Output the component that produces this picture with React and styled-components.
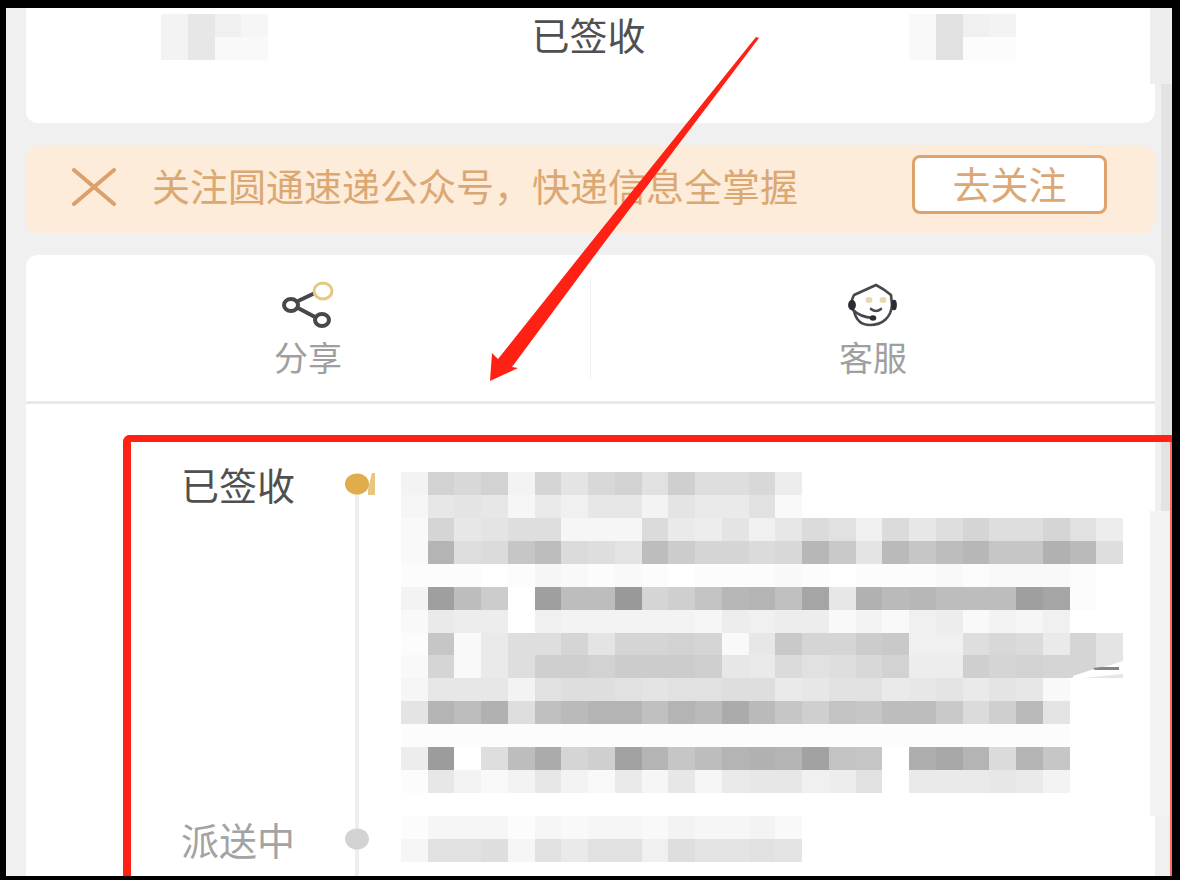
import React from "react";
import styled, { createGlobalStyle } from "styled-components";

const GlobalStyle = createGlobalStyle`
  * { box-sizing: border-box; }
  body {
    margin: 0;
    background: #000;
    font-family: "Noto Sans CJK SC", "Liberation Sans", sans-serif;
  }
  button { font-family: inherit; cursor: pointer; }
`;

const Frame = styled.div`
  min-height: 100vh;
  padding: 8px 8px 4px 6px;
  display: flex;
  background: #000;
`;

const Screen = styled.main`
  position: relative;
  flex: 1;
  min-width: 0;
  padding: 0 17px 0 20px;
  display: flex;
  flex-direction: column;
  background: #f0f0f0;
`;

const StatusCard = styled.header`
  padding: 6px 139px 63px 135px;
  display: flex;
  align-items: flex-start;
  justify-content: space-between;
  background: #fff;
  border-radius: 0 0 12px 12px;
`;

const StatusTitle = styled.h1`
  margin: 0;
  font-size: 38px;
  line-height: 40px;
  font-weight: 400;
  color: #505050;
`;

const Banner = styled.section`
  height: 87px;
  margin: 23px 0 22px;
  padding: 0 48px 6px 46px;
  display: flex;
  align-items: center;
  background: #fcecd9;
  border-radius: 12px;
`;

const CloseButton = styled.button`
  width: 44px;
  height: 38px;
  padding: 0;
  border: 0;
  background: none;
  svg { display: block; }
`;

const BannerText = styled.p`
  flex: 1;
  margin: 0 0 4px 36px;
  font-size: 38px;
  line-height: 46px;
  white-space: nowrap;
  color: #dba873;
`;

const FollowButton = styled.button`
  width: 195px;
  height: 59px;
  margin-bottom: 4px;
  padding: 0 0 4px;
  border: 3px solid #dfa26c;
  border-radius: 8px;
  background: #fff;
  font-size: 38px;
  line-height: 46px;
  color: #dba873;
`;

const Actions = styled.nav`
  display: flex;
  align-items: center;
  border-bottom: 3px solid #e8e8e8;
  border-radius: 12px 12px 0 0;
  background: #fff;
`;

const Divider = styled.span`
  width: 1px;
  height: 100px;
  background: #f1f1f1;
`;

const Action = styled.button`
  flex: 1;
  padding: 26px 0 23px;
  display: flex;
  flex-direction: column;
  align-items: center;
  gap: 5px;
  border: 0;
  background: none;
  font-size: 34px;
  line-height: 42px;
  color: #9f9f9f;
`;

const Timeline = styled.ol`
  flex: 1;
  margin: 0;
  padding: 68px 32px 0 155px;
  list-style: none;
  background: #fff;
`;

const Step = styled.li`
  min-height: ${(p) => (p.$last ? 49 : 355)}px;
  display: grid;
  grid-template-columns: 148px 56px 1fr;
`;

const StepLabel = styled.span`
  font-size: 38px;
  line-height: 24px;
  color: ${(p) => (p.$active ? "#505050" : "#a3a3a3")};
`;

const Rail = styled.span`
  position: relative;
  &::before {
    content: "";
    position: absolute;
    top: ${(p) => (p.$active ? 12 : 0)}px;
    bottom: 0;
    left: 26px;
    width: 4px;
    background: #eeeeee;
  }
  svg {
    position: absolute;
    top: 0;
    left: 16px;
  }
`;

const Detail = styled.div`
  position: relative;
  margin-top: ${(p) => (p.$raised ? -11 : 0)}px;
  padding-left: 16px;
`;

const MosaicSvg = styled.svg`
  display: block;
  width: ${(p) => p.$width};
  height: ${(p) => p.$height}px;
`;

const Smudge = styled.svg`
  position: absolute;
  top: 188px;
  right: 0;
`;

const HighlightBox = styled.div`
  position: absolute;
  top: 427px;
  left: 117px;
  right: 0;
  bottom: 0;
  border: solid #ff2113;
  border-width: 7px 0 0 8px;
  border-radius: 7px 0 0 0;
  pointer-events: none;
  &::after {
    content: "";
    position: absolute;
    top: 0;
    right: 0;
    bottom: 0;
    width: 2px;
    background: #fb6a61;
  }
`;

const Arrow = styled.svg`
  position: absolute;
  top: 28px;
  left: calc(50% - 101px);
  pointer-events: none;
`;

const EdgePatch = styled.span`
  position: absolute;
  right: 0;
  top: ${(p) => p.$top}px;
  width: ${(p) => p.$width}px;
  height: ${(p) => p.$height}px;
  background: ${(p) => p.$color};
`;

// Each character is one block; its base-36 value times three is its darkness.
const DELIVERED = [
  "4fdf4e9dfagbbd6000000000000",
  "3898375884977a2000000000000",
  "2e89bb333c76958ca5c8bebbea6",
  "2pbcjmcb9mheecdoi9njmojjqnb",
  "111013212101112101112122210",
  "4wmh0wmmyegkoplu8qnommmwu10",
  "276605444443656624256243500",
  "1j27bbe9eefe28ieehi55bdc7e9",
  "2e27bggfhhhg87cabdf66gefee9",
  "38884abba9aabb78aa789798200",
  "9pmqblnpplpnsnjgkjmmicgn900",
  "111111111111111111111111100",
  "6x0bmsegvpjmpqpvkj0rtpcpj00",
  "18424842738378856a077787400",
  "000000000000000000000000000",
];

const DELIVERING = [
  "133313233243342000000000000",
  "3aab3a7aa5b99a9000000000000",
];

const NAME_FROM = ["4853", "4822"];
const NAME_TO = ["2a54", "2a11"];

function Mosaic({ rows, width, height }) {
  return (
    <MosaicSvg
      $width={width}
      $height={height}
      viewBox={`0 0 ${rows[0].length} ${rows.length}`}
      preserveAspectRatio="none"
      shapeRendering="crispEdges"
      aria-hidden="true"
    >
      {rows.flatMap((row, y) =>
        [...row].map((c, x) => {
          const v = 255 - parseInt(c, 36) * 3;
          return c === "0" ? null : (
            <rect key={`${x}-${y}`} x={x} y={y} width="1" height="1" fill={`rgb(${v},${v},${v})`} />
          );
        })
      )}
    </MosaicSvg>
  );
}

function ShareIcon() {
  return (
    <svg width="52" height="50" viewBox="0 0 52 50" fill="none" stroke="#48484c" strokeWidth="4" aria-hidden="true">
      <path d="M16 20 33 12M16 27l17 9" />
      <ellipse cx="9" cy="24" rx="7" ry="6" />
      <ellipse cx="40" cy="39" rx="7" ry="6" />
      <ellipse cx="41" cy="10" rx="9" ry="8" stroke="#e6c882" strokeWidth="3" />
    </svg>
  );
}

function ServiceIcon() {
  return (
    <svg width="50" height="50" viewBox="0 0 50 50" fill="none" stroke="#48484c" strokeWidth="2.6" strokeLinecap="round" strokeLinejoin="round" aria-hidden="true">
      <path d="M4 19Q5 16 6 14Q17 9 28 4Q36 8 43 14L44 24C43 36 35 44 22 44C13 44 8 39 6 30" />
      <path d="M5 29Q12 36 25 37" />
      <path d="M23 28Q28 32 33 28" />
      <ellipse cx="4" cy="24" rx="2.6" ry="4" fill="#2c2c36" stroke="#2c2c36" />
      <ellipse cx="46" cy="24" rx="1.6" ry="4" fill="#2c2c36" stroke="#2c2c36" />
      <ellipse cx="25" cy="37" rx="2" ry="1.5" fill="#2c2c36" stroke="#2c2c36" />
      <g fill="#e6dab0" stroke="none">
        <ellipse cx="21" cy="19" rx="3.5" ry="3" />
        <ellipse cx="35" cy="19" rx="3.5" ry="3" />
      </g>
    </svg>
  );
}

function StepDot({ active }) {
  return (
    <svg width="30" height="24" viewBox="0 0 30 24" aria-hidden="true">
      {active && <path d="M23 17 27 1h3v22h-7z" fill="#e9c67d" />}
      <ellipse cx="12" cy="12" rx="12" ry="10.5" fill={active ? "#e0ac4c" : "#d3d3d3"} />
    </svg>
  );
}

export default function App() {
  return (
    <>
      <GlobalStyle />
      <Frame>
        <Screen>
          <StatusCard>
            <Mosaic rows={NAME_FROM} width="107px" height={46} />
            <StatusTitle>已签收</StatusTitle>
            <Mosaic rows={NAME_TO} width="107px" height={46} />
          </StatusCard>

          <Banner>
            <CloseButton aria-label="关闭">
              <svg width="44" height="38" viewBox="0 0 44 38" fill="none" stroke="#dca06b" strokeWidth="4" strokeLinecap="round">
                <path d="M2 2 42 36M42 2 2 36" />
              </svg>
            </CloseButton>
            <BannerText>关注圆通速递公众号，快递信息全掌握</BannerText>
            <FollowButton>去关注</FollowButton>
          </Banner>

          <Actions>
            <Action>
              <ShareIcon />
              分享
            </Action>
            <Divider />
            <Action>
              <ServiceIcon />
              客服
            </Action>
          </Actions>

          <Timeline>
            <Step>
              <StepLabel $active>已签收</StepLabel>
              <Rail $active>
                <StepDot active />
              </Rail>
              <Detail>
                <Mosaic rows={DELIVERED} width="100%" height={344} />
                <Smudge width="52" height="20" viewBox="0 0 52 20" aria-hidden="true">
                  <path d="M2 16 20 10 40 5 52 1V20H2z" fill="#fff" />
                  <path d="M12 18 52 14v4z" fill="#e6e6e6" />
                  <path d="M22 8 30 7H48v3H24z" fill="#858585" />
                </Smudge>
              </Detail>
            </Step>
            <Step $last>
              <StepLabel>派送中</StepLabel>
              <Rail>
                <StepDot />
              </Rail>
              <Detail $raised>
                <Mosaic rows={DELIVERING} width="100%" height={46} />
              </Detail>
            </Step>
          </Timeline>

          <EdgePatch $top={0} $width={22} $height={76} $color="#eeeeee" />
          <EdgePatch $top={76} $width={11} $height={430} $color="#e3e3e3" />
          <EdgePatch $top={503} $width={22} $height={305} $color="#f3f3f3" />
          <HighlightBox />
          <Arrow width="272" height="346" viewBox="0 0 272 346" aria-hidden="true">
            <path d="M268 1 271 2 113 211 24 331 30 332 2 345 4 317 10 323 100 210z" fill="#ff2113" />
          </Arrow>
        </Screen>
      </Frame>
    </>
  );
}
